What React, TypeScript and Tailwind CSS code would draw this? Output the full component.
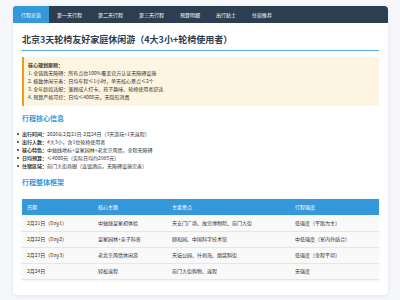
import React from "react";

const tabs = ["行程总览", "第一天行程", "第二天行程", "第三天行程", "预算明细", "出行贴士", "住宿推荐"];

const principles = [
  "1. 全链路无障碍：所有点位100%覆盖官方认证无障碍设施",
  "2. 极致休闲节奏：日均车程≤1小时，单天核心景点≤2个",
  "3. 全年龄段适配：兼顾成人打卡、孩子趣味、轮椅使用者舒适",
  "4. 预算严格可控：日均≤4000元，无隐形消费",
];

const info = [
  { label: "出行时间：", value: "2026年2月21日-2月24日（3天游玩+1天返程）" },
  { label: "出行人数：", value: "4大3小，含1位轮椅使用者" },
  { label: "核心特色：", value: "中轴线地标+皇家园林+老北京风情，全程无障碍" },
  { label: "日均预算：", value: "≤4000元（实际日均约2985元）" },
  { label: "住宿区域：", value: "前门大街商圈（连锁酒店，无障碍设施完善）" },
];

const rows = [
  ["2月21日（Day1）", "中轴线皇家初体验", "天安门广场、故宫博物院、前门大街", "低强度（平路为主）"],
  ["2月22日（Day2）", "皇家园林+亲子科普", "颐和园、中国科学技术馆", "中低强度（室内外结合）"],
  ["2月23日（Day3）", "老北京风情休闲游", "天坛公园、什刹海、烟袋斜街", "低强度（全程平坦）"],
  ["2月24日", "轻松返程", "前门大街购物、返程", "无强度"],
];

export default function App() {
  return (
    <div
      className="min-h-[300px] bg-[#f5f7fa] pt-[6px] pl-[13px] pr-[12px] pb-[6px] text-[#333]"
      style={{ fontFamily: '"Noto Sans CJK SC", "Noto Sans", sans-serif' }}
    >
      <div className="bg-white rounded-[4px] shadow-[0_1px_4px_rgba(0,0,0,0.08)] overflow-hidden">
        {/* Nav */}
        <div className="flex h-[17px] bg-[#2c3e50]">
          {tabs.map((t, i) => (
            <div
              key={t}
              className={`flex items-center px-[8px] text-[5px] leading-none text-white ${
                i === 0 ? "bg-[#3498db]" : ""
              }`}
            >
              {t}
            </div>
          ))}
        </div>

        <div className="px-[9px] pt-[11px] pb-[15px]">
          <h1 className="text-[9px] leading-[12px] font-bold text-[#2c3e50] pb-[4px] border-b border-[#5dade2]">
            北京3天轮椅友好家庭休闲游（4大3小+轮椅使用者）
          </h1>

          {/* Principles */}
          <div className="mt-[6px] bg-[#fdf5e1] border-l-2 border-[#f39c12] pl-[4px] pt-[4px] pb-[5px] text-[5px] leading-[8px]">
            <div className="font-bold">核心规划原则：</div>
            {principles.map((p) => (
              <div key={p}>{p}</div>
            ))}
          </div>

          <h2 className="mt-[8px] text-[7px] leading-[9px] font-semibold text-[#3498db]">行程核心信息</h2>
          <ul className="mt-[7px] text-[5px] leading-[8px]">
            {info.map((it) => (
              <li key={it.label} className="relative">
                <span className="absolute left-[-5px] top-[3px] w-[2px] h-[2px] rounded-full bg-[#333]" />
                <span className="font-bold">{it.label}</span>
                {it.value}
              </li>
            ))}
          </ul>

          <h2 className="mt-[8px] text-[7px] leading-[9px] font-semibold text-[#3498db]">行程整体框架</h2>

          <table className="mt-[12px] w-full table-fixed border-collapse text-[5px] shadow-[0_1px_2px_rgba(0,0,0,0.06)]">
            <colgroup>
              <col className="w-[71px]" />
              <col className="w-[74px]" />
              <col className="w-[123px]" />
              <col />
            </colgroup>
            <thead>
              <tr className="bg-[#3498db] text-white h-[16px]">
                <th className="text-left font-normal pl-[5px]">日期</th>
                <th className="text-left font-normal pl-[5px]">核心主题</th>
                <th className="text-left font-normal pl-[5px]">主要景点</th>
                <th className="text-left font-normal pl-[5px]">行程强度</th>
              </tr>
            </thead>
            <tbody>
              {rows.map((r) => (
                <tr key={r[0]} className="h-[16px] bg-[#f9f9f9] border-b border-[#e6e6e6]">
                  {r.map((c, j) => (
                    <td key={j} className="pl-[5px]">
                      {c}
                    </td>
                  ))}
                </tr>
              ))}
            </tbody>
          </table>
        </div>
      </div>
    </div>
  );
}
